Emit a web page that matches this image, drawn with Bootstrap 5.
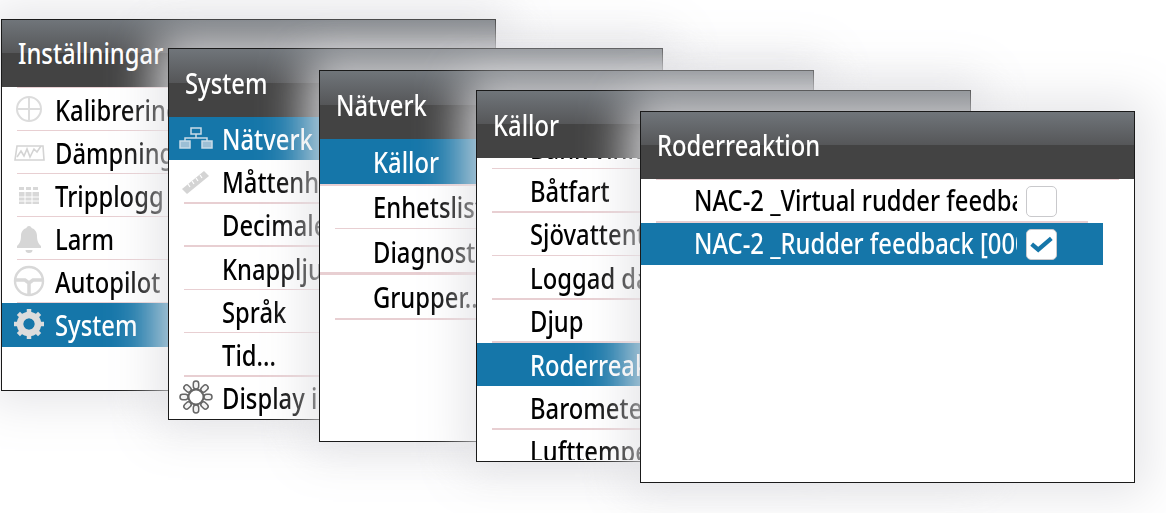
<!DOCTYPE html>
<html lang="sv"><head><meta charset="utf-8"><title>Roderreaktion</title>
<link rel="stylesheet" href="https://cdn.jsdelivr.net/npm/bootstrap@5.3.0/dist/css/bootstrap.min.css">
<style>
html,body{margin:0;height:513px;overflow:hidden;background:#fff}
.stage{position:relative;width:1166px;height:513px;font-family:"Noto Sans",sans-serif;filter:blur(.35px)}
.win{position:absolute;width:495px;height:371.500px;background:#fff;border:1.5px solid #1a1a1a;box-shadow:0 0 44px 12px rgba(226,226,230,.9);overflow:hidden}
.w1{left:1px;top:19px;--rh:43.1px}.w2{left:168px;top:48px;--rh:43.3px}.w3{left:319px;top:70px;--rh:45.2px}.w4{left:476px;top:90px;--rh:43.4px}.w5{left:640px;top:111px;--rh:42.7px}
.ttl{height:68px;flex:none;background:linear-gradient(#70757a 0,#555658 50%,#434343 50%,#434343 100%);color:#fff;padding:0 0 0 16px}
.w1 .ttl,.w5 .ttl{height:66.500px}
.w4 .ttl{height:67px}
.rows{width:462px;overflow:hidden;height:302px}
.w4 .scroller{margin-top:-32px}
.rw{position:relative;height:var(--rh);padding:0 0 0 53px;color:#000;flex:none}
.rw::after{content:"";position:absolute;left:15px;right:15px;bottom:0;height:1.5px;background:#e8cfd2}
.topline{height:1.5px;margin:0 15px;background:#e8cfd2;flex:none}
.rw.sel{background:#1576a9;color:#fff}
.rw.sel::after{display:none}
.w3 .rw.sel::after{display:block;left:0;right:15px;bottom:-1.500px}
.w3 .rw.wide::after{left:0;height:2.500px}
.cap,.lbl{display:inline-block;font-size:28px;font-weight:500;line-height:1;white-space:nowrap;transform:scaleX(.85);transform-origin:left center}
.clip{width:323px;overflow:hidden;flex:none}
.ico{position:absolute;left:10px;top:50%;margin-top:-18px;width:34px;height:34px}
.tick{width:31px;height:31px;border:1.5px solid #c9c9cc;border-radius:5px;background:#fff;margin-left:9px;flex:none}
.tick svg{display:block;width:100%;height:100%}
</style></head><body>
<main class="stage">

<section class="win w1 d-flex flex-column">
 <div class="ttl d-flex align-items-center"><span class="cap">Inställningar</span></div>
 <div class="topline"></div>
 <div class="rows">
  <div class="rw d-flex align-items-center"><svg class="ico" viewBox="0 0 34 34" fill="none" stroke="#dcdcdc" stroke-width="2"><circle cx="17" cy="17" r="12"/><path d="M17 5v24M5 17h24"/></svg><span class="lbl">Kalibrering</span></div>
  <div class="rw d-flex align-items-center"><svg class="ico" viewBox="0 0 34 34" fill="none" stroke="#d4d4d4" stroke-width="1.6"><path d="M3 25h29l-1-14H5z"/><path d="M5 22l4-6 3 5 3-7 3 8 4-8 3 3 4-6"/></svg><span class="lbl">Dämpning</span></div>
  <div class="rw d-flex align-items-center"><svg class="ico" viewBox="0 0 34 34" fill="#d8d8d8"><path d="M7 9h5v3H7zM14 9h5v3h-5zM21 9h5v3h-5zM7 14h20v12H7z"/><path d="M7 19h20M7 23h20M13 14v12M20 14v12" stroke="#fff" stroke-width="1"/></svg><span class="lbl">Tripplogg</span></div>
  <div class="rw d-flex align-items-center"><svg class="ico" viewBox="0 0 34 34" fill="#d6d6d6"><path d="M17 5c1.500 0 2.500 1 2.500 2 3.500 1 5.500 4 5.500 8 0 6 2 8 4 10v2H5v-2c2-2 4-4 4-10 0-4 2-7 5.500-8 0-1 1-2 2.500-2zM13.500 29h7a3.500 3 0 0 1-7 0z"/></svg><span class="lbl">Larm</span></div>
  <div class="rw d-flex align-items-center"><svg class="ico" viewBox="0 0 34 34" fill="none" stroke="#d8d8d8" stroke-width="2.400"><circle cx="17" cy="17" r="14"/><path d="M3 16h10l4 3 4-3h10M17 19v11" stroke-width="3.500"/></svg><span class="lbl">Autopilot</span></div>
  <div class="rw sel d-flex align-items-center"><svg class="ico" viewBox="0 0 34 34"><defs><mask id="gearhole"><rect width="34" height="34" fill="#fff"/><circle cx="17" cy="17" r="6" fill="#000"/></mask></defs><circle cx="17" cy="17" r="9" fill="none" stroke="#dcdcdc" stroke-width="6.500"/><path d="M17 17V2M17 17V32M17 17H2M17 17H32M17 17L6.400 6.400M17 17L27.600 27.600M17 17L27.600 6.400M17 17L6.400 27.600" stroke="#dcdcdc" stroke-width="4.500" mask="url(#gearhole)"/></svg><span class="lbl">System</span></div>
 </div>
</section>

<section class="win w2 d-flex flex-column">
 <div class="ttl d-flex align-items-center"><span class="cap">System</span></div>
 <div class="rows">
  <div class="rw sel d-flex align-items-center"><svg class="ico" viewBox="0 0 34 34" fill="none" stroke="#c9dbe7" stroke-width="1.500"><rect x="12" y="7" width="10" height="6"/><rect x="1" y="20" width="10" height="7" fill="#9dbfd5"/><rect x="23" y="20" width="10" height="7" fill="#9dbfd5"/><path d="M17 13v4M6 20v-3h22v3"/></svg><span class="lbl">Nätverk</span></div>
  <div class="rw d-flex align-items-center"><svg class="ico" viewBox="0 0 34 34"><path d="M3 25L25 7l5 5-22 18z" fill="#d4d4d4"/><path d="M9 20l2 3M13 17l2 3M17 14l2 3M21 11l2 3" stroke="#fff" stroke-width="1.200"/></svg><span class="lbl">Måttenheter</span></div>
  <div class="rw d-flex align-items-center"><span class="lbl">Decimaler</span></div>
  <div class="rw d-flex align-items-center"><span class="lbl">Knappljud</span></div>
  <div class="rw d-flex align-items-center"><span class="lbl">Språk</span></div>
  <div class="rw d-flex align-items-center"><span class="lbl">Tid...</span></div>
  <div class="rw d-flex align-items-center"><svg class="ico" viewBox="0 0 34 34" fill="#f4f4f4" stroke="#666" stroke-width="1.500"><circle cx="17" cy="17" r="7.500" fill="#fff" stroke-width="2"/><rect x="14.300" y="1" width="5.400" height="8" rx="2.700"/><rect x="14.300" y="25" width="5.400" height="8" rx="2.700"/><rect x="1" y="14.300" width="8" height="5.400" rx="2.700"/><rect x="25" y="14.300" width="8" height="5.400" rx="2.700"/><rect x="14.300" y="1" width="5.400" height="8" rx="2.700" transform="rotate(45 17 17)"/><rect x="14.300" y="25" width="5.400" height="8" rx="2.700" transform="rotate(45 17 17)"/><rect x="14.300" y="1" width="5.400" height="8" rx="2.700" transform="rotate(-45 17 17)"/><rect x="14.300" y="25" width="5.400" height="8" rx="2.700" transform="rotate(-45 17 17)"/></svg><span class="lbl">Display inställningar</span></div>
 </div>
</section>

<section class="win w3 d-flex flex-column">
 <div class="ttl d-flex align-items-center"><span class="cap">Nätverk</span></div>
 <div class="rows">
  <div class="rw sel d-flex align-items-center"><span class="lbl">Källor</span></div>
  <div class="rw d-flex align-items-center"><span class="lbl">Enhetslista</span></div>
  <div class="rw wide d-flex align-items-center"><span class="lbl">Diagnostik</span></div>
  <div class="rw d-flex align-items-center"><span class="lbl">Grupper...</span></div>
 </div>
</section>

<section class="win w4 d-flex flex-column">
 <div class="ttl d-flex align-items-center"><span class="cap">Källor</span></div>
 <div class="rows"><div class="scroller">
  <div class="rw d-flex align-items-center"><span class="lbl">Bank vinkel</span></div>
  <div class="rw d-flex align-items-center"><span class="lbl">Båtfart</span></div>
  <div class="rw d-flex align-items-center"><span class="lbl">Sjövattentemp</span></div>
  <div class="rw d-flex align-items-center"><span class="lbl">Loggad data</span></div>
  <div class="rw d-flex align-items-center"><span class="lbl">Djup</span></div>
  <div class="rw sel d-flex align-items-center"><span class="lbl">Roderreaktion</span></div>
  <div class="rw d-flex align-items-center"><span class="lbl">Barometertryck</span></div>
  <div class="rw d-flex align-items-center"><span class="lbl">Lufttemperatur</span></div>
 </div></div>
</section>

<section class="win w5 d-flex flex-column">
 <div class="ttl d-flex align-items-center"><span class="cap">Roderreaktion</span></div>
 <div class="topline"></div>
 <div class="rows">
  <div class="rw d-flex align-items-center"><div class="clip"><span class="lbl">NAC-2 _Virtual rudder feedback [0001]</span></div><div class="tick"></div></div>
  <div class="rw sel d-flex align-items-center"><div class="clip"><span class="lbl">NAC-2 _Rudder feedback [0002]</span></div><div class="tick"><svg viewBox="0 0 31 31" fill="none" stroke="#1576a9" stroke-width="4.500"><path d="M5 15l7 6 14-12"/></svg></div></div>
 </div>
</section>

</main>
<script src="https://cdn.jsdelivr.net/npm/bootstrap@5.3.0/dist/js/bootstrap.bundle.min.js"></script>
</body></html>
